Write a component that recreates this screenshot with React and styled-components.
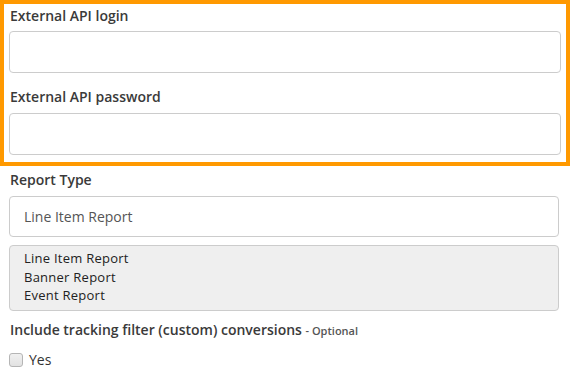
import React from "react";
import styled, { createGlobalStyle } from "styled-components";

const Global = createGlobalStyle`
  html, body { margin: 0; padding: 0; background: #fff; }
  body { font-family: "Open Sans", "Liberation Sans", sans-serif; color: #333; }
  * { box-sizing: border-box; }
`;

const Page = styled.div`
  width: 571px;
  height: 378px;
  overflow: hidden;
`;

const Highlight = styled.div`
  width: 570px;
  border: 4px solid #ff9900;
  padding: 2px 5px 7px;
`;

const Section = styled.div`
  width: 550px;
  margin-left: 9px;
  padding-top: 4px;
`;

const Label = styled.div`
  font-size: 14px;
  line-height: 20px;
  font-weight: 600;
  color: #3a3a3a;
  margin-bottom: ${(p) => p.$mb ?? 5}px;
  padding-left: 1px;
`;

const Optional = styled.span`
  font-size: 11px;
  font-weight: 600;
  color: #555;
`;

const Input = styled.div`
  height: 42px;
  border: 1px solid #ccc;
  border-radius: 4px;
  background: #fff;
  margin-bottom: ${(p) => p.$mb ?? 0}px;
`;

const Select = styled.div`
  height: 41px;
  border: 1px solid #ccc;
  border-radius: 4px;
  background: #fff;
  padding-left: 14px;
  display: flex;
  align-items: center;
  font-size: 14px;
  color: #555;
  margin-bottom: 8px;
`;

const OptionList = styled.div`
  height: 66px;
  border: 1px solid #ccc;
  border-radius: 4px;
  background: #efefef;
  padding: 3px 14px;
  margin-bottom: 9px;
`;

const Option = styled.div`
  font-size: 13px;
  line-height: 18.7px;
  letter-spacing: 0.25px;
  color: #222;
`;

const CheckRow = styled.label`
  display: flex;
  align-items: center;
  gap: 6px;
  margin-top: 9px;
  font-size: 14px;
  line-height: 20px;
  color: #333;
`;

const Box = styled.span`
  width: 14px;
  height: 14px;
  border: 1px solid #b5b5b5;
  border-radius: 3px;
  background: linear-gradient(#f0f0f0, #e2e2e2);
`;

export default function App() {
  return (
    <Page>
      <Global />
      <Highlight>
        <Label>External API login</Label>
        <Input $mb={14} />
        <Label $mb={6}>External API password</Label>
        <Input />
      </Highlight>
      <Section>
        <Label $mb={6}>Report Type</Label>
        <Select>Line Item Report</Select>
        <OptionList>
          <Option>Line Item Report</Option>
          <Option>Banner Report</Option>
          <Option>Event Report</Option>
        </OptionList>
        <Label>
          Include tracking filter (custom) conversions <Optional>- Optional</Optional>
        </Label>
        <CheckRow>
          <Box />
          Yes
        </CheckRow>
      </Section>
    </Page>
  );
}
